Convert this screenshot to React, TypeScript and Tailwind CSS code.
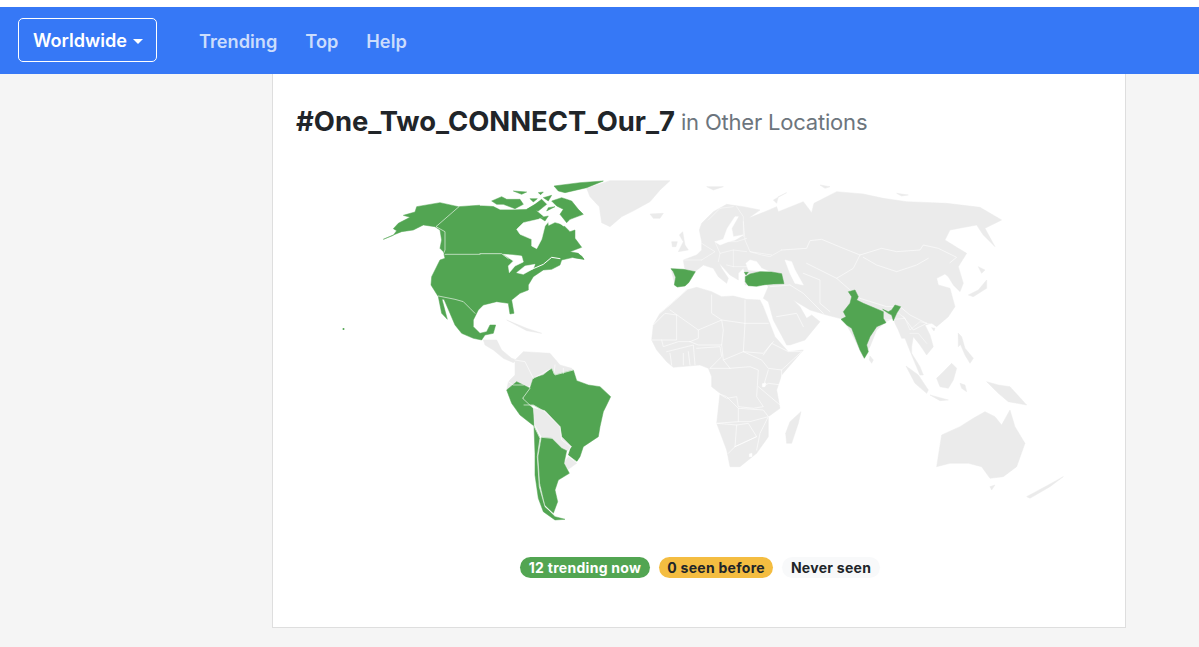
import React from 'react';

const GREEN = '#52a552';
const GRAY = '#ebebeb';

// traced in zoomed crop coordinates, placed by the group transforms below
const Land = ({ d, fill = GRAY }: { d: string; fill?: string }) => (
  <path d={d} fill={fill} stroke={fill} strokeWidth={1.5} strokeLinejoin="round" />
);

const Line = ({ d, w = 1.8 }: { d: string; w?: number }) => (
  <path d={d} fill="none" stroke="#fff" strokeWidth={w} strokeLinejoin="round" strokeLinecap="round" />
);

const Crop = ({ x, y, children }: { x: number; y: number; children: React.ReactNode }) => (
  <g transform={`translate(${x} ${y}) scale(0.3333)`}>{children}</g>
);

const NorthAmerica = () => (
  <>
    <Crop x={330} y={170}>
      <Land fill={GREEN} d="M160 208L190 196L200 182L190 176L205 160L240 142L220 136L255 126L260 110L330 98L385 110L460 105L490 106L510 118L550 118L590 118L615 103L635 88L650 120L655 168L675 158L700 165L720 185L735 180L735 205L755 232L720 245L745 250L762 268L730 262L695 270L690 285L665 298L640 300L610 320L595 345L595 360L570 370L545 390L552 430L540 432L535 400L500 395L460 405L445 420L430 450L430 470L450 490L470 485L480 465L497 465L490 490L465 495L455 510L430 505L395 490L375 465L360 430L342 388L336 388L350 440L352 448L335 430L325 380L303 345L305 320L330 270L345 265L340 245L330 235L335 210L330 180L315 170L280 165L250 180L215 185L190 195Z" />
      <Land d="M530 450L590 475L635 490L590 482Z" />
    </Crop>
    {/* Hudson bay, lakes and the arctic islands */}
    <Crop x={480} y={176}>
      <Land fill="#fff" d="M110 160L130 140L175 130L200 118L212 130L195 150L185 190L170 218L155 210L155 190L120 175Z" />
      <Land fill="#fff" d="M70 235L100 237L125 240L130 258L105 270L88 290L85 270L100 255ZM110 290L135 270L165 265L160 278L130 295Z" />
      <Land fill="#fff" d="M185 70L215 60L300 60L320 120L270 145L250 150L225 130L190 120L160 95Z" />
      <Land fill="#fff" d="M0 60L40 30L100 25L185 72L160 88L140 98L100 100L60 100L40 90L0 88Z" />
      <Land fill={GREEN} d="M215 75L245 65L275 75L295 100L310 115L270 130L260 140L240 115L250 100L230 90ZM35 75L65 62L80 70L120 70L130 85L105 98L70 85L50 85ZM150 68L172 68L160 78ZM100 45L140 48L125 55ZM175 50L190 48L182 56ZM222 30L300 20L370 15L320 35L255 50L235 45ZM190 65L215 58L205 75ZM205 95L225 92L200 105ZM180 125L205 120L195 135ZM140 100L165 85L185 70L200 85L175 105Z" />
      <Land fill={GREEN} d="M290 232L305 240L312 250L280 245Z" />
      <Line d="M0 233L65 233L85 248" w={2} />
      <Line d="M130 288L160 278L190 265L215 244L240 248" w={3} />
    </Crop>
    <Crop x={330} y={170}>
      <Line d="M387 110L318 170L345 185L345 240L340 252" />
      <Line d="M345 253L450 253" />
      <Line d="M325 378L375 388L400 395L420 415L435 430" />
    </Crop>
  </>
);

const SouthAmerica = () => (
  <Crop x={480} y={340}>
    <Land d="M10 0L50 0L65 30L95 55L110 60L100 68L70 55L40 30L15 15ZM80 150L85 125L105 105L105 60L130 35L210 40L240 75L275 85L290 122L160 130L130 150Z" />
    <Land fill={GREEN} d="M160 115L190 105L215 85L225 105L280 90L290 122L325 135L360 140L392 170L380 195L370 215L360 260L355 290L310 320L300 350L290 365L265 345L272 320L245 300L240 260L195 215L160 195L135 195L130 170L150 145Z" />
    <Land fill={GREEN} d="M80 150L110 125L130 135L150 145L128 175L160 205L162 258L120 225L95 190Z" />
    <Land d="M160 205L195 212L240 260L245 290L275 320L262 332L245 325L215 295L185 290L165 255ZM265 350L290 370L265 388L252 370Z" />
    <Land fill={GREEN} d="M185 292L215 295L245 325L260 332L252 370L268 400L235 420L225 450L233 485L220 520L195 495L180 430L175 350Z" />
    <Land fill={GREEN} d="M162 258L180 295L172 350L178 440L195 500L225 530L255 538L225 540L190 515L175 475L165 405L165 340Z" />
    <Line d="M150 145L128 175L160 205M162 258L180 295L172 350L178 440L195 500L225 525M185 292L215 295M160 115L215 85L225 105L280 90M132 195L160 195L195 215L240 260L245 300L272 320L262 345L290 365M85 125L100 135L130 135M105 60L135 65L160 115M225 75L222 100M250 85L250 100" />
  </Crop>
);

const Eurasia = () => (
  <Crop x={630} y={170}>
    {/* Greenland */}
    <Land d="M-130 55L-60 32L120 32L90 60L60 95L15 120L-25 140L-60 170L-85 158L-92 110L-120 80Z" />
    <Land d="M123 295L165 300L160 270L200 255L215 240L215 215L208 180L215 160L250 125L290 103L340 110L390 120L355 145L405 125L440 110L445 125L520 95L545 128L552 100L620 65L700 72L760 85L830 95L950 100L1050 112L1115 150L1065 175L1095 230L1060 195L1040 165L960 180L945 210L985 235L1010 250L985 290L1000 340L990 365L970 345L955 320L945 312L920 325L925 345L960 355L975 410L955 440L920 470L905 460L885 465L900 495L910 530L890 555L870 525L850 500L845 530L845 550L870 590L880 615L870 615L845 555L825 505L815 505L805 480L795 460L790 445L768 455L740 480L720 530L700 560L670 500L640 448L590 435L540 420L490 390L510 410L530 445L545 435L570 455L525 510L480 525L470 525L430 450L415 395L400 385L415 350L410 345L345 345L345 310L340 295L325 310L325 330L300 315L268 280L275 295L295 325L290 340L265 320L250 295L220 285L195 305L160 345L145 350L135 345Z" />
    {/* inland seas */}
    <Land fill="#fff" d="M348 280L360 270L380 275L395 295L430 310L380 302L355 300ZM465 270L485 275L495 300L520 345L495 340L480 310ZM255 215L280 208L292 175L315 140L325 140L305 175L310 200L340 195L315 210L295 215L270 225Z" />
    {/* islands */}
    <Land d="M158 185L165 225L175 240L145 245L160 215L148 195ZM125 215L142 215L138 230L127 230ZM60 132L100 130L90 145L70 145ZM230 50L280 50L250 60ZM430 90L470 68L445 80L440 100ZM570 45L600 50L585 55ZM800 70L835 75L815 78ZM1070 330L1070 355L1030 380L1015 375L1045 360ZM1045 290L1065 300L1055 310ZM985 490L995 520L985 530Z" />
    <Line d="M455 240L530 235L540 212L575 208L640 235L690 255L755 235L800 245L870 240L880 225L925 235L980 262L960 278M700 262L740 285L800 305L860 285L895 265M690 255L670 295L620 325L660 360L690 385L770 410L810 410L840 435L890 460M530 280L560 295L620 325M520 310L570 330L570 400L600 425M480 345L520 370L580 430M420 350L480 345M440 440L500 430L520 470M820 440L850 480L890 460" />
    {/* Europe */}
    <Line d="M455 240L420 260L395 255L360 245L345 210L340 155M215 220L255 245L215 270M255 215L270 250L310 240L350 245M280 215L320 215L350 205M270 250L265 275M310 240L310 290L290 285M235 150L270 115L310 110M320 110L340 140L340 200M360 245L425 255M310 290L350 290" w={1.4} />
    <Line d="M160 270L215 270" w={1.4} />
  </Crop>
);

const Africa = () => (
  <Crop x={650} y={290}>
    <Land d="M110 0L65 40L30 70L10 105L5 150L20 180L50 215L70 232L150 225L175 235L185 260L185 290L210 310L200 400L230 480L240 530L270 530L320 490L355 440L355 380L390 355L380 300L395 255L460 180L415 185L375 140L340 50L330 30L290 28L250 18L215 20L185 5L140 -8Z" />
    <Land d="M453 365L445 400L425 460L410 460L407 430L420 395Z" />
    <Line d="M110 0L60 45L30 70M60 60L145 120L145 145L120 155M10 105L45 70L80 75L80 150L35 150L5 150M35 150L40 170L85 155L120 155M145 120L215 90L220 120L215 165L145 165L120 155M185 15L185 70L215 90L285 100L285 30M285 100L355 100M285 100L280 185L220 210L215 165M280 185L340 190L370 155M340 195L365 160L415 185L455 185L395 240L355 235L335 210L280 185M140 175L210 170L215 200L180 235M240 235L300 230L325 240L320 320L340 350L310 355L265 350L260 320L230 325L205 310M50 185L130 165L135 225M100 190L100 225M115 185L120 225M60 190L65 225M395 240L395 285L355 280L340 290L355 240M325 290L390 345M205 310L230 320L265 355L265 395L200 400M265 355L340 360L355 380L300 395L265 395M200 400L260 405L255 470L235 490M260 405L295 400L320 440L255 470M355 380L330 430L320 480M255 470L320 440M180 235L240 235M220 210L240 235" />
    <Land fill="#fff" d="M337 281L348 279L345 290L337 290ZM298 492L306 490L306 500L298 500Z" />
  </Crop>
);

const SouthAsiaPacific = () => (
  <Crop x={830} y={280}>
    <Land d="M120 228L130 240L125 250L118 240ZM228 258L265 285L295 330L290 340L255 310ZM300 345L355 360L330 362ZM320 295L340 275L365 250L380 265L370 300L355 325L330 320ZM390 310L405 315L410 335L395 325ZM385 160L395 170L405 205L430 235L420 250L405 225L390 190ZM305 143L315 145L312 153Z" />
    <Line d="M168 120L225 115L240 150L270 125L310 135M240 160L265 160L290 190M200 95L225 115" w={1.4} />
  </Crop>
);

const Oceania = () => (
  <Crop x={640} y={290}>
    <Land d="M890 530L905 435L960 410L1000 385L1035 365L1065 380L1085 405L1110 360L1125 410L1155 460L1130 530L1090 560L1050 565L1025 530L985 520L930 520Z" />
    <Land d="M1050 590L1065 585L1055 600ZM1160 620L1225 585L1270 560L1230 590L1170 625ZM1040 275L1075 285L1110 290L1160 345L1105 335L1075 310Z" />
  </Crop>
);

const Trending = () => (
  <>
    <Crop x={640} y={200}>
      <Land fill={GREEN} d="M93 206L130 208L166 215L156 232L146 248L135 258L112 261L103 255L107 232L100 215Z" />
      <Land fill={GREEN} d="M316 230L330 222L360 215L395 216L425 221L432 251L400 252L375 254L350 259L325 257L316 245ZM313 217L325 217L318 225Z" />
    </Crop>
    <Crop x={830} y={280}>
      <Land fill={GREEN} d="M55 35L75 30L85 50L80 60L100 70L160 95L160 115L168 128L140 140L120 170L110 195L115 215L103 235L90 210L65 145L50 135L33 118L48 110L40 95L60 70L65 50Z" />
      <Land fill={GREEN} d="M158 88L175 95L185 90L195 75L212 80L200 100L190 122L185 105L175 100Z" />
    </Crop>
  </>
);

const WorldMap = () => (
  <svg viewBox="273 160 851 380" className="block h-[380px] w-[851px]">
    <Oceania />
    <Africa />
    <Eurasia />
    <SouthAsiaPacific />
    <SouthAmerica />
    <NorthAmerica />
    <Trending />
    <circle cx="343.5" cy="329" r="1" fill={GREEN} />
  </svg>
);

const Pill = ({ className, children }: { className: string; children: React.ReactNode }) => (
  <span className={`inline-flex h-[21px] items-center rounded-full px-[8.5px] text-[14px] font-bold tracking-[0.28px] ${className}`}>
    {children}
  </span>
);

export default function App() {
  return (
    <div className="h-[647px] overflow-hidden bg-[#f5f5f5] font-['Inter',sans-serif]">
      <div className="h-[7px] bg-white" />
      <nav className="flex h-[67px] items-start gap-[42px] bg-[#3678f6] pl-[18px] pt-[11px]">
        <button className="flex h-[44px] w-[139px] items-center justify-center gap-[6px] rounded-[5px] border border-white pl-[1px] pt-[2px] text-[18.1px] font-semibold text-white">
          Worldwide
          <span className="mt-[1px] h-0 w-0 border-x-[5px] border-t-[5px] border-x-transparent border-t-white" />
        </button>
        <div className="mt-[9.5px] flex gap-[28px] text-[18.2px] font-semibold text-white/75">
          <a>Trending</a>
          <a>Top</a>
          <a>Help</a>
        </div>
      </nav>
      <main className="ml-[272px] h-[554px] w-[854px] border-x border-b border-[#dedede] bg-white">
        <h1 className="ml-[23px] flex h-[86px] items-center pt-[9px] text-[#212529]">
          <span className="text-[27.4px] font-bold">#One_Two_CONNECT_Our_7</span>
          <span className="ml-[6px] mt-[2px] text-[22px] tracking-[-0.2px] text-[#6c757d]">in Other Locations</span>
        </h1>
        <WorldMap />
        <div className="mt-[17px] flex justify-center gap-[9px] pl-[2px]">
          <Pill className="bg-[#52a552] text-white">12 trending now</Pill>
          <Pill className="bg-[#f4bd41] text-[#212529]">0 seen before</Pill>
          <Pill className="bg-[#f8f9fa] text-[#212529]">Never seen</Pill>
        </div>
      </main>
    </div>
  );
}
